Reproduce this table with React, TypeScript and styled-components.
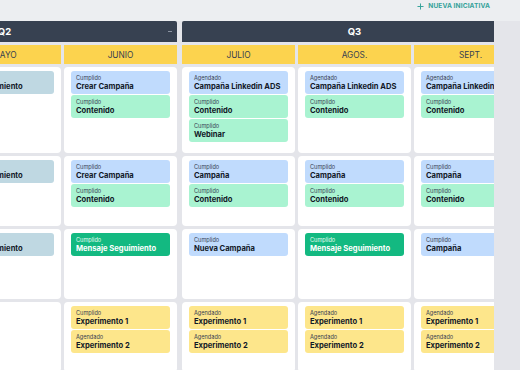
import { useLayoutEffect, useRef } from "react";
import styled, { createGlobalStyle } from "styled-components";
import { Plus } from "lucide-react";

type Tone = "blue" | "green" | "done" | "yellow" | "muted";

type Card = { status: string; title: string; tone: Tone };

const tones: Record<Tone, { bg: string; fg: string; sub: string }> = {
  blue: { bg: "#c0dbfd", fg: "#111827", sub: "#374151" },
  green: { bg: "#a9f3d1", fg: "#111827", sub: "#374151" },
  done: { bg: "#13b981", fg: "#ffffff", sub: "#e7fbf2" },
  yellow: { bg: "#fde68b", fg: "#111827", sub: "#374151" },
  muted: { bg: "#bfd8e2", fg: "#111827", sub: "#374151" },
};

const quarters = [
  { name: "Q2", months: ["ABRIL", "MAYO", "JUNIO"], collapsible: true },
  { name: "Q3", months: ["JULIO", "AGOS.", "SEPT."], collapsible: true },
];

const lev: Card = { status: "Cumplido", title: "Comportamiento", tone: "muted" };
const c = (status: string, title: string, tone: Tone): Card => ({ status, title, tone });

// rows x months (abril .. sept)
const rows: Card[][][] = [
  [
    [lev],
    [lev],
    [c("Cumplido", "Crear Campaña", "blue"), c("Cumplido", "Contenido", "green")],
    [
      c("Agendado", "Campaña Linkedin ADS", "blue"),
      c("Cumplido", "Contenido", "green"),
      c("Cumplido", "Webinar", "green"),
    ],
    [c("Agendado", "Campaña Linkedin ADS", "blue"), c("Cumplido", "Contenido", "green")],
    [c("Agendado", "Campaña Linkedin ADS", "blue"), c("Cumplido", "Contenido", "green")],
  ],
  [
    [lev],
    [lev],
    [c("Cumplido", "Crear Campaña", "blue"), c("Cumplido", "Contenido", "green")],
    [c("Cumplido", "Campaña", "blue"), c("Cumplido", "Contenido", "green")],
    [c("Cumplido", "Campaña", "blue"), c("Cumplido", "Contenido", "green")],
    [c("Cumplido", "Campaña", "blue"), c("Cumplido", "Contenido", "green")],
  ],
  [
    [lev],
    [lev],
    [c("Cumplido", "Mensaje Seguimiento", "done")],
    [c("Cumplido", "Nueva Campaña", "blue")],
    [c("Cumplido", "Mensaje Seguimiento", "done")],
    [c("Cumplido", "Campaña", "blue")],
  ],
  [
    [],
    [],
    [c("Cumplido", "Experimento 1", "yellow"), c("Agendado", "Experimento 2", "yellow")],
    [c("Agendado", "Experimento 1", "yellow"), c("Agendado", "Experimento 2", "yellow")],
    [c("Agendado", "Experimento 1", "yellow"), c("Agendado", "Experimento 2", "yellow")],
    [c("Agendado", "Experimento 1", "yellow"), c("Agendado", "Experimento 2", "yellow")],
  ],
];

const GlobalStyle = createGlobalStyle`
  html, body {
    margin: 0;
    padding: 0;
    overflow: hidden;
  }
  body {
    font-family: Inter, "Liberation Sans", sans-serif;
    background: #e4e5ea;
  }
`;

const Page = styled.div`
  height: 370px;
  overflow: hidden;
  display: flex;
  flex-direction: column;
`;

const Toolbar = styled.div`
  height: 21px;
  flex: none;
  background: #eceef1;
  display: flex;
  justify-content: flex-end;
  align-items: flex-start;
  padding: 2px 30px 0 0;
  box-sizing: border-box;
`;

const NewButton = styled.button`
  display: flex;
  align-items: center;
  gap: 3px;
  border: none;
  background: none;
  padding: 0;
  cursor: pointer;
  color: #35a29a;
  font-family: Inter, "Liberation Sans", sans-serif;
  font-size: 6.6px;
  font-weight: 700;
  letter-spacing: 0.1px;
  line-height: 9px;
`;

const Board = styled.div`
  width: 494px;
  flex: 1;
  overflow: hidden;
`;

const Grid = styled.div`
  display: grid;
  grid-template-columns: 113px 113px 113px 115px 113px 113px;
  column-gap: 3px;
  row-gap: 3px;
  width: max-content;
`;

const QuarterHead = styled.div<{ $start: number; $gapped: boolean }>`
  grid-column: ${({ $start }) => `${$start} / span 3`};
  margin-left: ${({ $gapped }) => ($gapped ? "2px" : "0")};
  height: 21px;
  background: #374151;
  border-radius: 2px 2px 0 0;
  display: grid;
  grid-template-columns: 1fr auto 1fr;
  align-items: center;
  color: #ffffff;
  font-size: 9.5px;
  font-weight: 700;
`;

const QuarterName = styled.span`
  grid-column: 2;
`;

const Collapse = styled.span`
  grid-column: 3;
  justify-self: end;
  margin-right: 5px;
  width: 4px;
  height: 1px;
  background: #8b93a1;
`;

const MonthHead = styled.div<{ $gapped: boolean }>`
  margin-left: ${({ $gapped }) => ($gapped ? "2px" : "0")};
  height: 19px;
  background: #fcd34e;
  display: flex;
  align-items: center;
  justify-content: center;
  color: #374151;
  font-size: 8.3px;
`;

const Cell = styled.div<{ $gapped: boolean }>`
  margin-left: ${({ $gapped }) => ($gapped ? "2px" : "0")};
  min-height: 70px;
  background: #ffffff;
  border-radius: 4px;
  padding: 4px 7px 11px;
  box-sizing: border-box;
  display: flex;
  flex-direction: column;
  gap: 1px;
`;

const CardBox = styled.div<{ $tone: Tone }>`
  height: 23px;
  box-sizing: border-box;
  padding: 3px 5px 2px;
  border-radius: 3px;
  background: ${({ $tone }) => tones[$tone].bg};
  color: ${({ $tone }) => tones[$tone].fg};
  display: flex;
  flex-direction: column;
  white-space: nowrap;
  overflow: hidden;
`;

const Status = styled.span<{ $tone: Tone }>`
  font-size: 5.6px;
  line-height: 8px;
  color: ${({ $tone }) => tones[$tone].sub};
`;

const Title = styled.span`
  font-size: 7.6px;
  line-height: 10px;
  font-weight: 700;
`;

export default function App() {
  const boardRef = useRef<HTMLDivElement>(null);

  useLayoutEffect(() => {
    if (boardRef.current) boardRef.current.scrollLeft = 168;
  }, []);

  return (
    <Page>
      <GlobalStyle />
      <Toolbar>
        <NewButton>
          <Plus size={9} strokeWidth={2.6} />
          NUEVA INICIATIVA
        </NewButton>
      </Toolbar>
      <Board ref={boardRef}>
        <Grid>
          {quarters.map((q, qi) => (
            <QuarterHead key={q.name} $start={qi * 3 + 1} $gapped={qi > 0}>
              <QuarterName>{q.name}</QuarterName>
              {q.collapsible && <Collapse />}
            </QuarterHead>
          ))}
          {quarters.flatMap((q, qi) =>
            q.months.map((m, mi) => (
              <MonthHead key={m} $gapped={qi > 0 && mi === 0}>
                {m}
              </MonthHead>
            ))
          )}
          {rows.flatMap((row, ri) =>
            row.map((cards, ci) => (
              <Cell key={`${ri}-${ci}`} $gapped={ci === 3}>
                {cards.map((card, k) => (
                  <CardBox key={k} $tone={card.tone}>
                    <Status $tone={card.tone}>{card.status}</Status>
                    <Title>{card.title}</Title>
                  </CardBox>
                ))}
              </Cell>
            ))
          )}
        </Grid>
      </Board>
    </Page>
  );
}
